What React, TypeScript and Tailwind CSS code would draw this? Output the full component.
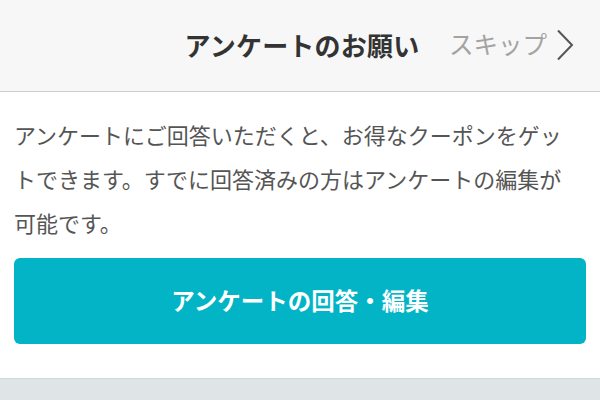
import React from "react";

export default function App() {
  return (
    <main
      className="flex h-[400px] w-[600px] flex-col overflow-hidden bg-white"
      style={{ fontFamily: '"Noto Sans CJK JP", "Noto Sans", sans-serif' }}
    >
      {/* header */}
      <header className="relative flex h-[92px] shrink-0 items-center justify-center border-b-[1.5px] border-[#cdcdcd] bg-[#f7f7f7]">
        <h1 className="pb-[2px] pl-[4px] text-[26px] font-bold tracking-[0.2px] text-[#333]">アンケートのお願い</h1>
        <button className="absolute right-[26px] top-0 flex h-full items-center gap-[9px] pb-[2px]">
          <span className="text-[24.5px] text-[#a3a3a3]">スキップ</span>
          <svg width="18" height="32" viewBox="0 0 18 32" fill="none">
            <path d="M2 1.5 L16 16 L2 30.5" stroke="#555" strokeWidth="2" />
          </svg>
        </button>
      </header>

      {/* body */}
      <section className="shrink-0 px-[14px] pt-[20px]">
        <p className="pr-[6px] text-[22px] leading-[44px] text-[#555]">
          アンケートにご回答いただくと、お得なクーポンをゲットできます。すでに回答済みの方はアンケートの編集が可能です。
        </p>
        <button className="mt-[14px] flex h-[86px] w-full items-center justify-center rounded-[6px] bg-[#02b4c6] text-[23.5px] font-bold text-white">
          アンケートの回答・編集
        </button>
      </section>

      <div className="mt-[34px] flex-1 border-t border-[#cfd7d7] bg-[#dfe5e6]" />
    </main>
  );
}
